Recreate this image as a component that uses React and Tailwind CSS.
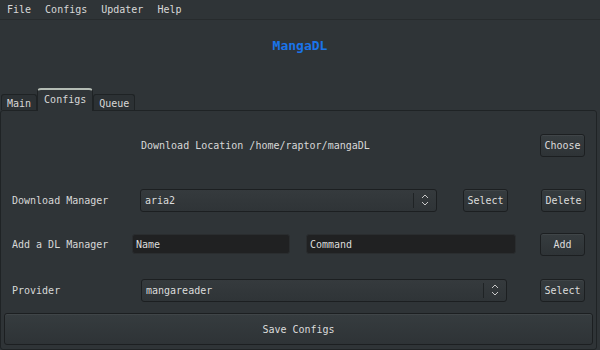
import { useState } from 'react';

const font = { fontFamily: '"DejaVu Sans Mono", "Liberation Mono", monospace' };

function Btn({ children, className = '' }) {
  return (
    <button
      type="button"
      className={`h-[23px] rounded-[3px] border border-[#1c1f21] bg-gradient-to-b from-[#363c3f] to-[#2e3336] text-[10px] text-[#dcdcdc] shadow-[inset_0_1px_0_rgba(255,255,255,0.05)] ${className}`}
    >
      {children}
    </button>
  );
}

function Combo({ value, className = '' }) {
  return (
    <div
      className={`flex h-[23px] items-center rounded-[3px] border border-[#1c1f21] bg-gradient-to-b from-[#353a3d] to-[#2f3437] ${className}`}
    >
      <span className="flex-1 pl-[4px] text-[10px] text-[#dcdcdc]">{value}</span>
      <div className="h-[15px] w-px bg-[#1f2325]" />
      <svg width="22" height="14" viewBox="0 0 22 14" className="text-[#c8c8c8]">
        <path d="M8 5 L11 2 L14 5" fill="none" stroke="currentColor" strokeWidth="1" />
        <path d="M8 9 L11 12 L14 9" fill="none" stroke="currentColor" strokeWidth="1" />
      </svg>
    </div>
  );
}

function Field({ placeholder, className = '' }) {
  return (
    <div
      className={`flex h-[20px] items-center rounded-[3px] border border-[#2a2d2f] bg-[#202122] pl-[3px] text-[10px] text-[#dcdcdc] ${className}`}
    >
      {placeholder}
    </div>
  );
}

export default function App() {
  const [tab, setTab] = useState('Configs');
  const tabs = ['Main', 'Configs', 'Queue'];

  return (
    <div className="flex h-[350px] w-[600px] flex-col overflow-hidden bg-[#2f3437] text-[#d8d8d8]" style={font}>
      {/* Menu */}
      <div className="flex h-[20px] items-center gap-[14px] border-b border-[#272b2d] pl-[7px] text-[10px]">
        <span>File</span>
        <span>Configs</span>
        <span>Updater</span>
        <span>Help</span>
      </div>

      {/* Title */}
      <div className="flex h-[68px] items-center justify-center pb-[16px]">
        <span className="text-[13px] font-bold text-[#1a74ea]">MangaDL</span>
      </div>

      {/* Tabs */}
      <div className="flex h-[22px] items-end pl-[1px]">
        {tabs.map((t) =>
          t === tab ? (
            <div
              key={t}
              className="relative z-10 -mb-px flex h-[23px] items-start rounded-t-[4px] border-x border-t-2 border-x-[#1f2325] border-t-[#b4bcb4] bg-[#2f3437] px-[6px] pt-[2px] text-[10px]"
            >
              {t}
            </div>
          ) : (
            <div
              key={t}
              onClick={() => setTab(t)}
              className="flex h-[16px] items-center rounded-t-[3px] border-x border-t border-[#1f2325] bg-[#2c3134] px-[5px] pt-[2px] text-[10px]"
            >
              {t}
            </div>
          )
        )}
      </div>

      {/* Pane */}
      <div className="mr-[3px] flex flex-1 flex-col rounded-[3px] border border-[#1f2325] text-[10px]">
        <div className="flex h-[68px] items-center pr-[11px]">
          <span className="ml-[140px] flex-1">Download Location /home/raptor/mangaDL</span>
          <Btn className="w-[45px]">Choose</Btn>
        </div>

        <div className="flex h-[42px] items-center">
          <span className="w-[139px] pl-[11px]">Download Manager</span>
          <Combo value="aria2" className="w-[297px]" />
          <Btn className="ml-[26px] w-[45px]">Select</Btn>
          <Btn className="ml-[33px] w-[45px]">Delete</Btn>
        </div>

        <div className="flex h-[46px] items-center">
          <span className="w-[131px] pl-[11px]">Add a DL Manager</span>
          <Field placeholder="Name" className="w-[158px]" />
          <Field placeholder="Command" className="ml-[16px] w-[210px]" />
          <Btn className="ml-[24px] w-[45px]">Add</Btn>
        </div>

        <div className="flex h-[46px] items-center">
          <span className="w-[140px] pl-[11px]">Provider</span>
          <Combo value="mangareader" className="w-[366px]" />
          <Btn className="ml-[33px] w-[45px]">Select</Btn>
        </div>

        <div className="flex px-[3px]">
          <Btn className="h-[32px] w-full">Save Configs</Btn>
        </div>
      </div>
    </div>
  );
}
